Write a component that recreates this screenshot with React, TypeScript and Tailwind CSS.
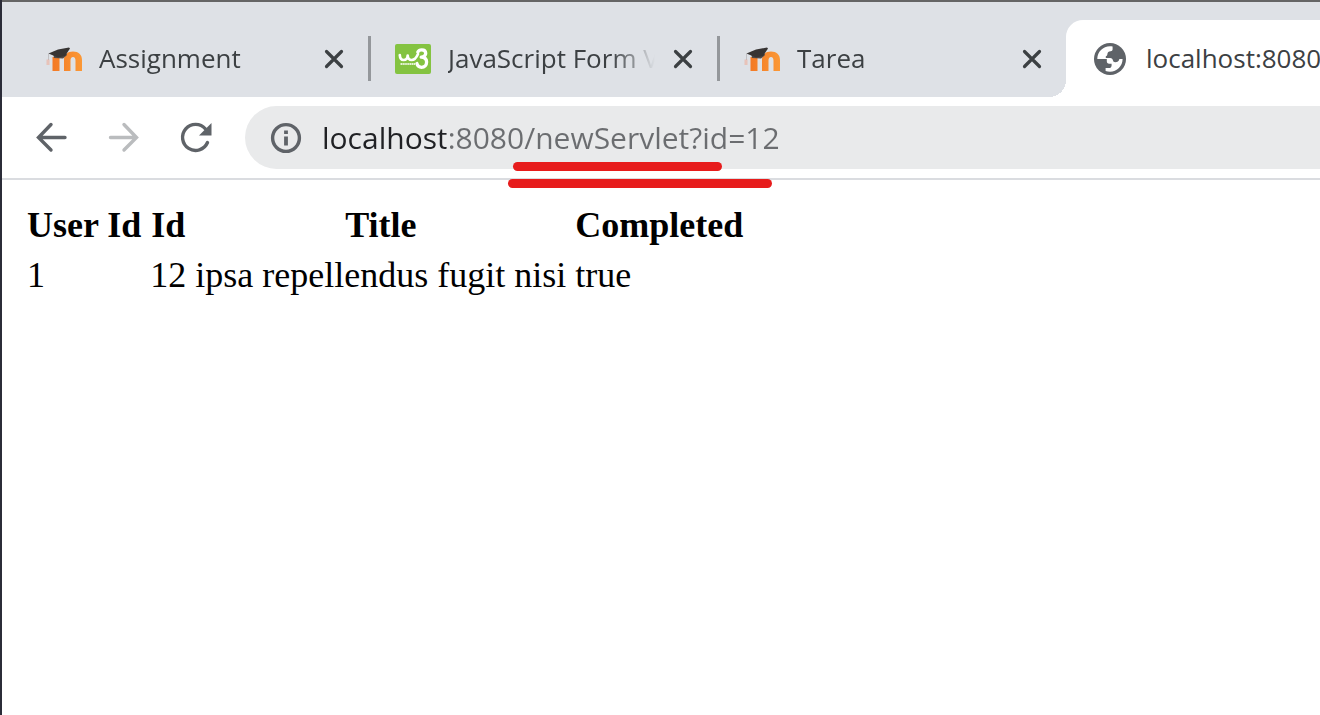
import React from "react";

function MoodleIcon() {
  return (
    <svg viewBox="0 0 36 36" className="size-9 shrink-0" aria-hidden="true">
      <defs>
        <linearGradient id="moodle" x1="0" x2="1">
          <stop offset="0" stopColor="#f37a26" />
          <stop offset="1" stopColor="#fb9836" />
        </linearGradient>
      </defs>
      <path
        d="M6.500 30V16h7v14zM18 30V19c0-5.500 3.500-8.500 9-8.500s9 3 9 8.500v11h-6.500V19.500c0-2.300-.8-3.500-2.500-3.500s-2.500 1.200-2.500 3.500V30z"
        fill="url(#moodle)"
      />
      <path d="M7 11l12-1.500 2 4.500-4 3.500-9-.5z" fill="#4f4946" />
      <path d="M2.500 12.500L12 8.500l11-2 1 1-5 7.500-7 1.500z" fill="#373433" />
      <path d="M2.500 12.500V19" stroke="#8d8583" strokeWidth="1" opacity=".35" />
      <path d="M.5 18.500h3V24h-3z" fill="#f2a58c" opacity=".5" />
    </svg>
  );
}

function W3Icon() {
  return (
    <svg viewBox="0 0 36 36" className="size-9 shrink-0" aria-hidden="true">
      <rect x="0" y="3" width="36" height="30" rx="2" fill="#84c341" />
      <g fill="none" stroke="#fff" strokeLinecap="round" strokeLinejoin="round">
        <path d="M4.800 14c.2 3.600 1.600 5 3.800 5s3.900-1.600 4.100-4.500c.2 2.900 1.600 4.500 3.900 4.500 3 0 4.900-2.500 6.400-6" strokeWidth="2.700" />
        <path d="M22.800 11c.9-1.700 2.200-2.200 3.900-2.200 2.500 0 4 1.500 4 3.500 0 2.300-1.700 3.600-4.500 3.900 3.500.2 5.400 2 5.400 4.900 0 3.200-2 5.200-5 5.200-2.600 0-4.200-1.400-4.700-3.800" strokeWidth="3.300" />
        <path d="M5.500 23h14.500" strokeWidth="2" strokeDasharray="1.500 .4" strokeLinecap="butt" opacity=".8" />
      </g>
    </svg>
  );
}

function GlobeIcon() {
  return (
    <svg viewBox="0 0 32 32" className="size-8 shrink-0" aria-hidden="true">
      <circle cx="16" cy="16" r="16" fill="#5f6368" />
      <path
        d="M3.300 16C3.300 9 9 3.300 16 3.300c1 0 1.800.1 2.600.3v2.600c0 1.200-.8 1.900-2 2.100-1.900.3-3.200 1.100-3.200 2.700 0 1.300-.6 1.900-1.600 2.200v1.800h4.400c1.600 0 2.500.9 2.800 2.600.2 1.100 1 1.600 2.200 1.600 2.300 0 3.600-.9 4.200-3.200h3.200C28.600 23 23 28.700 16 28.700c-1.500 0-3-.3-4.400-.8v-2.900h3.200c1.700 0 2.800-1 2.800-2.600v-1.600h-2.400c-1.600 0-2.400-.9-2.400-2.500V16z"
        fill="#fff"
      />
    </svg>
  );
}

function CloseButton({ title }: { title: string }) {
  return (
    <button type="button" aria-label={`Close ${title}`} className="flex size-7 shrink-0 items-center justify-center">
      <svg viewBox="0 0 20 20" className="size-5" fill="none" stroke="#3c4043" strokeWidth="3.200" strokeLinecap="round">
        <path d="M2.500 2.500l15 15M17.500 2.500l-15 15" />
      </svg>
    </button>
  );
}

function Tab({ title, icon }: { title: string; icon: React.ReactNode }) {
  return (
    <div className="flex h-full w-[346px] shrink-0 items-center pr-5 pl-6">
      {icon}
      <a
        href="#"
        className="mr-[14px] ml-[17px] flex-1 overflow-hidden whitespace-nowrap [mask-image:linear-gradient(to_right,black_calc(100%-44px),transparent)]"
      >
        {title}
      </a>
      <CloseButton title={title} />
    </div>
  );
}

function Separator() {
  return <div className="h-[45px] w-[3px] shrink-0 bg-[#94979b]" />;
}

function Toolbar() {
  return (
    <div className="relative flex h-[83px] items-center border-b-2 border-[#dadce0] bg-white pl-8">
      <div className="flex gap-9">
        <button type="button" aria-label="Back">
          <svg viewBox="0 0 36 36" className="size-9" fill="none" stroke="#5f6368" strokeWidth="3.400" strokeLinecap="round">
            <path d="M31 17.500H5M17 4.500l-12.500 13L17 30" />
          </svg>
        </button>
        <button type="button" aria-label="Forward">
          <svg viewBox="0 0 36 36" className="size-9" fill="none" stroke="#babcbe" strokeWidth="3.400" strokeLinecap="round">
            <path d="M4.500 17.500H30M18 4.500l12.500 13L18 30" />
          </svg>
        </button>
        <button type="button" aria-label="Reload">
          <svg viewBox="0 0 36 36" className="size-9" fill="none">
            <path d="M27.500 9A13 13 0 1 0 29.500 22.500" stroke="#5f6368" strokeWidth="3.400" strokeLinecap="round" />
            <path d="M33.500 3v12.500H21z" fill="#5f6368" />
          </svg>
        </button>
      </div>
      <div className="ml-[31px] flex h-[63px] min-w-0 flex-1 items-center rounded-l-full bg-[#e9eaeb] pl-[25px]">
        <svg viewBox="0 0 32 32" className="size-8 shrink-0" fill="none" aria-hidden="true">
          <circle cx="16" cy="16" r="13.400" stroke="#5f6368" strokeWidth="3.400" />
          <path d="M16 14.500v9M16 8.500v3.500" stroke="#5f6368" strokeWidth="3.800" />
        </svg>
        <input
          type="text"
          aria-label="Address"
          defaultValue="localhost:8080/newServlet?id=12"
          className="ml-5 h-full min-w-0 flex-1 bg-linear-to-r from-[#202124] from-[124px] to-[#6b6d70] to-[124px] bg-clip-text text-[30px] text-transparent outline-none"
        />
      </div>
      <span className="absolute top-[65px] left-[511px] h-[9px] w-[209px] rounded-full bg-[#e71c1c]" />
      <span className="absolute top-[82px] left-[506px] h-[9px] w-[264px] rounded-full bg-[#e71c1c]" />
    </div>
  );
}

export default function App() {
  return (
    <div className="min-h-screen overflow-hidden border-l-2 border-[#2b2c38] bg-white font-['Open_Sans','Noto_Sans',sans-serif]">
      <nav className="flex h-[97px] items-end border-t-2 border-[#656565] bg-[#dee1e6] pl-5 text-[26px] text-[#3c4043]">
        <div className="flex h-[77px] shrink-0 items-center">
          <Tab title="Assignment" icon={<MoodleIcon />} />
          <Separator />
          <Tab title="JavaScript Form Validation" icon={<W3Icon />} />
          <Separator />
          <Tab title="Tarea" icon={<MoodleIcon />} />
        </div>
        <div className="relative flex h-[77px] min-w-0 flex-1 items-center rounded-tl-[17px] bg-white pl-7 before:absolute before:bottom-0 before:-left-[17px] before:size-[17px] before:bg-[radial-gradient(circle_at_top_left,transparent_17px,white_17px)]">
          <GlobeIcon />
          <a href="#" className="ml-5 flex-1 overflow-hidden whitespace-nowrap">
            localhost:8080/
          </a>
        </div>
      </nav>
      <Toolbar />
      <main className="p-[18px] font-['Liberation_Serif',serif] text-[36px] leading-[41px] text-black">
        <table className="border-separate border-spacing-[5px]">
          <thead>
            <tr>
              <th className="p-[2px]">User Id</th>
              <th className="p-[2px]">Id</th>
              <th className="p-[2px]">Title</th>
              <th className="p-[2px]">Completed</th>
            </tr>
          </thead>
          <tbody>
            <tr>
              <td className="p-[2px]">1</td>
              <td className="p-[2px]">12</td>
              <td className="p-[2px]">ipsa repellendus fugit nisi</td>
              <td className="p-[2px]">true</td>
            </tr>
          </tbody>
        </table>
      </main>
    </div>
  );
}
